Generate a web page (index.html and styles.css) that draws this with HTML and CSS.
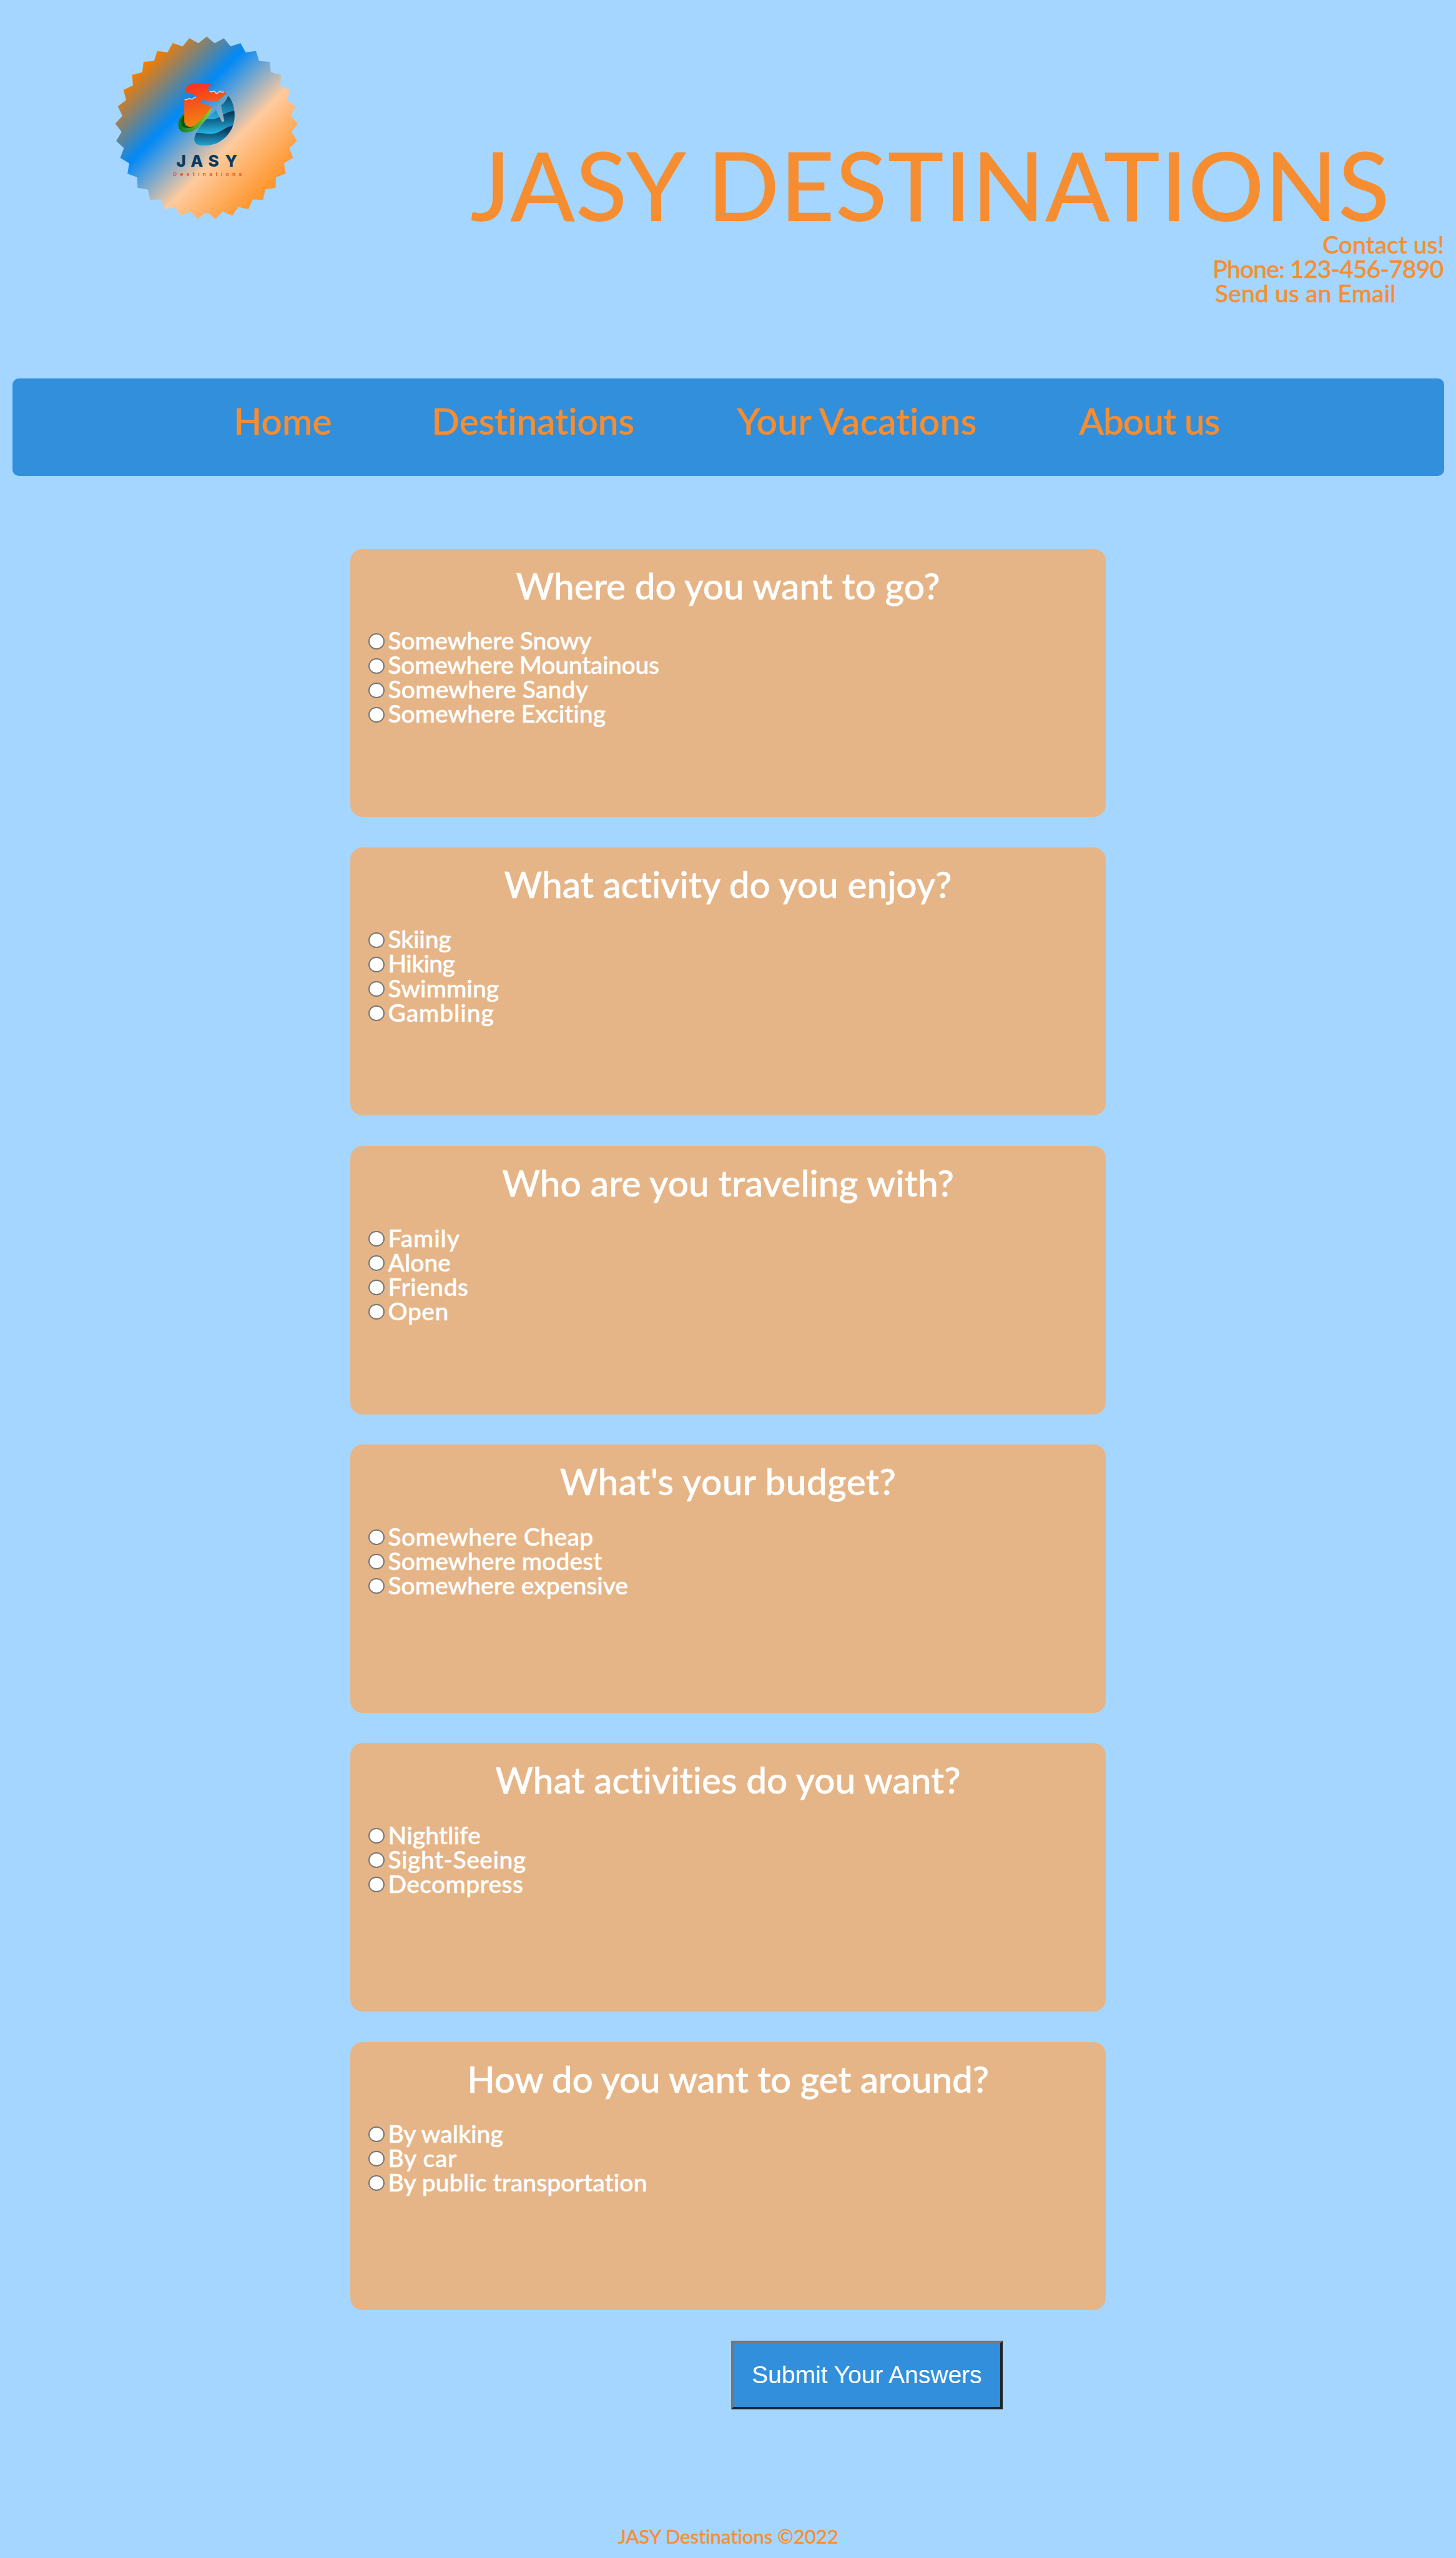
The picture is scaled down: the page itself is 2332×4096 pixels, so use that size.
FILE: index.html
```
<!DOCTYPE html>
<html lang="en">
<head>
<meta charset="utf-8">
<title>JASY Destinations</title>
<link rel="stylesheet" href="styles.css">
</head>
<body>
<header class="header">
  <svg class="logo" viewBox="0 0 1020 1020" role="img" aria-label="JASY Destinations">
    <defs>
      <linearGradient id="badge" gradientUnits="userSpaceOnUse" x1="195" y1="205" x2="795" y2="805">
        <stop offset="0" stop-color="#f57c00"/>
        <stop offset=".34" stop-color="#0089f7"/>
        <stop offset=".68" stop-color="#ffca9d"/>
        <stop offset="1" stop-color="#ff9832"/>
      </linearGradient>
      <linearGradient id="sun" x1="0" y1="0" x2=".25" y2="1">
        <stop offset="0" stop-color="#ff2a1f"/>
        <stop offset=".5" stop-color="#f4581a"/>
        <stop offset="1" stop-color="#f0860b"/>
      </linearGradient>
      <linearGradient id="leaf" x1="0" y1="0" x2="1" y2="0">
        <stop offset="0" stop-color="#0a7a25"/>
        <stop offset="1" stop-color="#8ed040"/>
      </linearGradient>
      <linearGradient id="sea1" gradientUnits="userSpaceOnUse" x1="260" y1="85" x2="255" y2="200">
        <stop offset="0" stop-color="#0e4d70"/>
        <stop offset="1" stop-color="#24b4e2"/>
      </linearGradient>
      <linearGradient id="sea2" gradientUnits="userSpaceOnUse" x1="210" y1="168" x2="215" y2="262">
        <stop offset="0" stop-color="#08395c"/>
        <stop offset="1" stop-color="#23b2e0"/>
      </linearGradient>
      <linearGradient id="sea3" gradientUnits="userSpaceOnUse" x1="190" y1="240" x2="190" y2="328">
        <stop offset="0" stop-color="#062f53"/>
        <stop offset="1" stop-color="#23a6d2"/>
      </linearGradient>
      <clipPath id="drop">
        <path d="M268 81C291 108 300 138 300 180C300 258 238 327 152 327C112 327 99 312 102 292C108 250 160 196 208 153L238 211Q246 211 249 205L233 130Q260 106 268 81Z"/>
      </clipPath>
    </defs>
    <polygon fill="url(#badge)" points="507,60 546.8,92.9 592.2,68.1 625,108 674.2,92.2 699,137.6 750.3,131.4 766,180.6 817.5,184.3 823.7,235.6 873.6,249 869.9,300.5 916.3,323.1 903,373 944.3,403.9 921.7,450.4 956.5,488.6 925.5,529.9 952.4,574 914.2,608.8 932.3,657.2 888.1,684.1 896.7,735 848.3,753 847.1,804.7 796.1,813.2 785.2,863.7 733.5,862.5 713.2,910 662.7,899 633.8,941.8 586.3,921.4 549.8,958 515,929 499,929 464.2,958 427.7,921.4 380.2,941.8 351.3,899 300.8,910 280.5,862.5 228.8,863.7 217.9,813.2 166.9,804.7 165.7,753 117.3,735 125.9,684.1 81.7,657.2 99.8,608.8 61.6,574 88.5,529.9 57.5,488.6 92.3,450.4 69.7,403.9 111,373 97.7,323.1 144.1,300.5 140.4,249 190.3,235.6 196.5,184.3 248,180.6 263.7,131.4 315,137.6 339.8,92.2 389,108 421.8,68.1 467.2,92.9"/>
    <g transform="translate(345 270)">
      <path fill="url(#leaf)" d="M52 169C28 184 20 210 24 236C30 264 62 268 92 256C132 238 174 192 190 140L110 210Z"/>
      <path fill="#005a16" d="M52 178C35 190 32 216 40 229C52 243 78 243 95 234L60 205Z"/>
      <path fill="url(#sun)" d="M55 65C58 38 72 24 100 24L150 24C176 24 192 28 203 33C196 33 190 37 182 36C176 34 172 36 172 40L174 42C168 46 167 53 174 58C184 64 194 58 204 65C214 69 222 62 232 65C240 62 246 66 249 61L260 71Q238 85 214 112L137 102Q132 109 131 115L190 137C168 162 130 208 104 227C82 240 53 236 52 206V99C66 104 74 98 84 97C94 98 104 92 110 90C114 86 112 80 102 82C92 68 75 69 66 66Z"/>
      <path fill="none" stroke="#c3d8ec" stroke-width="5" d="M54 99Q63 104 70 98T84 97T98 93T110 91M177 59Q185 65 192 60T205 65T220 65T234 62T248 61"/>
      <circle cx="116" cy="85" r="3.5" fill="#3189d4"/>
      <circle cx="172" cy="39" r="3.5" fill="#3189d4"/>
      <g clip-path="url(#drop)">
        <path fill="url(#sea1)" d="M95 70H305V335H95Z"/>
        <path fill="url(#sea2)" d="M150 195C185 200 208 198 232 183C258 165 278 156 305 156V335H95V195Z"/>
        <path fill="url(#sea3)" d="M95 266C135 260 152 271 190 269C234 266 250 232 305 227V335H95Z"/>
      </g>
    </g>
    <text class="logo-name" x="358 428 515 598" y="701">JASY</text>
    <text class="logo-sub" x="342" y="747" textLength="338" lengthAdjust="spacing">Destinations</text>
  </svg>
  <div class="masthead">
    <h1 class="title">JASY DESTINATIONS</h1>
    <div class="contact">
      <p class="contact-lead">Contact us!</p>
      <p class="contact-phone">Phone: 123-456-7890</p>
      <p class="contact-mail">Send us an Email</p>
    </div>
  </div>
</header>

<nav class="nav">
  <a class="nav-home">Home</a>
  <a class="nav-dest">Destinations</a>
  <a class="nav-vac">Your Vacations</a>
  <a class="nav-about">About us</a>
</nav>

<main class="quiz">
  <section class="card">
    <h2>Where do you want to go?</h2>
    <label><input type="radio" name="q1"><span class="tight-2">Somewhere Snowy</span></label>
    <label><input type="radio" name="q1"><span class="tight-3">Somewhere Mountainous</span></label>
    <label><input type="radio" name="q1"><span class="loose-2">Somewhere Sandy</span></label>
    <label><input type="radio" name="q1"><span>Somewhere Exciting</span></label>
  </section>
  <section class="card">
    <h2>What activity do you enjoy?</h2>
    <label><input type="radio" name="q2"><span class="tight-2">Skiing</span></label>
    <label><input type="radio" name="q2"><span class="tight-7">Hiking</span></label>
    <label><input type="radio" name="q2"><span class="loose-1">Swimming</span></label>
    <label><input type="radio" name="q2"><span class="loose-9">Gambling</span></label>
  </section>
  <section class="card">
    <h2 class="loose-1">Who are you traveling with?</h2>
    <label><input type="radio" name="q3"><span class="loose-9">Family</span></label>
    <label><input type="radio" name="q3"><span>Alone</span></label>
    <label><input type="radio" name="q3"><span class="loose-5">Friends</span></label>
    <label><input type="radio" name="q3"><span class="loose-5">Open</span></label>
  </section>
  <section class="card">
    <h2 class="loose-4">What's your budget?</h2>
    <label><input type="radio" name="q4"><span class="loose-4">Somewhere Cheap</span></label>
    <label><input type="radio" name="q4"><span class="loose-1">Somewhere modest</span></label>
    <label><input type="radio" name="q4"><span>Somewhere expensive</span></label>
  </section>
  <section class="card">
    <h2>What activities do you want?</h2>
    <label><input type="radio" name="q5"><span class="loose-1">Nightlife</span></label>
    <label><input type="radio" name="q5"><span class="loose-5">Sight-Seeing</span></label>
    <label><input type="radio" name="q5"><span class="loose-4">Decompress</span></label>
  </section>
  <section class="card">
    <h2 class="tight-2">How do you want to get around?</h2>
    <label><input type="radio" name="q6"><span>By walking</span></label>
    <label><input type="radio" name="q6"><span class="loose-7">By car</span></label>
    <label><input type="radio" name="q6"><span class="loose-1">By public transportation</span></label>
  </section>
  <button class="submit" type="button">Submit Your Answers</button>
</main>

<footer class="footer">JASY Destinations ©2022</footer>
</body>
</html>
```
FILE: styles.css
```
* { box-sizing: border-box; }

html { background: #a4d6ff; }

body {
  margin: 0;
  padding: 0 19.5px;
  height: 4096px;
  overflow: hidden;
  background: #a4d6ff;
  color: #f68e31;
  font-family: Lato, "Open Sans", sans-serif;
  font-weight: 500;
  font-kerning: normal;
  font-variant-ligatures: none;
}

h1, h2, p { margin: 0; font-weight: 500; }

/* Header */
.header {
  display: flex;
  justify-content: space-between;
  align-items: flex-start;
  height: 605.9px;
}
.logo {
  flex: none;
  width: 331.75px;
  height: 331.75px;
  margin: 39px 0 0 146.4px;
}
.logo-name { font: 800 80px Inter, sans-serif; fill: #0a3a5f; }
.logo-sub { font: 500 28px Roboto, sans-serif; fill: #d9531c; }

.masthead {
  display: flex;
  flex-direction: column;
  align-items: flex-end;
  padding-top: 216.5px;
}
.title {
  margin-right: 86px;
  font-size: 152px;
  line-height: 156px;
  letter-spacing: .9px;
  white-space: nowrap;
}
.contact {
  display: flex;
  flex-direction: column;
  align-items: flex-end;
  margin-top: -.7px;
  font-size: 39px;
  line-height: 39.03px;
  -webkit-text-stroke: .4px;
}
.contact-lead { margin-right: -.7px; }
.contact-phone { margin-right: 1px; letter-spacing: -.82px; }
.contact-mail { margin-right: 76.7px; letter-spacing: .13px; }

/* Navigation */
.nav {
  display: flex;
  gap: 159.9px;
  height: 156.1px;
  padding: 38.6px 0 0 354.9px;
  border-radius: 10px;
  background: #328fdb;
  font-size: 58.5px;
  line-height: 58.5px;
  white-space: nowrap;
  -webkit-text-stroke: .5px;
}
.nav-home { letter-spacing: .2px; }
.nav-vac { margin-left: 4.8px; letter-spacing: .45px; }
.nav-about { margin-left: 3.7px; letter-spacing: -.94px; }

/* Questionnaire */
.quiz {
  display: flex;
  flex-direction: column;
  align-items: center;
  gap: 48.8px;
  padding-top: 117.1px;
}
.card {
  display: flex;
  flex-direction: column;
  width: 1210px;
  height: 429.3px;
  padding: 29px 29.3px 0;
  border-radius: 19.5px;
  background: #e6b587;
  color: #fff;
  -webkit-text-stroke: .5px;
}
.card h2 {
  margin-bottom: 39.8px;
  font-size: 58.5px;
  line-height: 58.5px;
  text-align: center;
}
.card label {
  display: flex;
  align-items: center;
  gap: 5.8px;
  height: 39.03px;
  font-size: 39px;
  line-height: 39.03px;
}
.card input {
  appearance: none;
  flex: none;
  width: 25.4px;
  height: 25.4px;
  margin: 2.6px 0 0;
  border: 2.4px solid #767676;
  border-radius: 50%;
  background: #fff;
}

.submit {
  width: 435px;
  height: 110.2px;
  margin-left: 444.6px;
  padding: 0;
  border: 4px solid;
  border-color: #767676 #212121 #212121 #767676;
  background: #328fdb;
  color: #fff;
  font: 39px "Liberation Sans", Arial, sans-serif;
}

.footer {
  margin-top: 183.2px;
  font-size: 31.2px;
  line-height: 40px;
  letter-spacing: -.12px;
  text-align: center;
  -webkit-text-stroke: .3px;
}

/* Tracking steps, in tenths of a pixel */
.tight-2 { letter-spacing: -.2px; }
.tight-3 { letter-spacing: -.3px; }
.tight-7 { letter-spacing: -.7px; }
.loose-1 { letter-spacing: .1px; }
.loose-2 { letter-spacing: .2px; }
.loose-4 { letter-spacing: .4px; }
.loose-5 { letter-spacing: .5px; }
.loose-7 { letter-spacing: .7px; }
.loose-9 { letter-spacing: .9px; }
```
